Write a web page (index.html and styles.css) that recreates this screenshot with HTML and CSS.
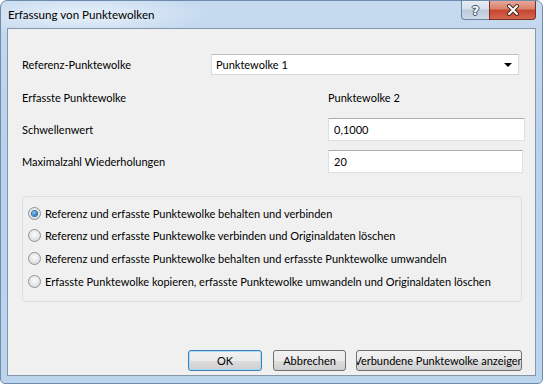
FILE: index.html
```html
<!DOCTYPE html>
<html lang="de">
<head>
  <meta charset="UTF-8" />
  <title>Erfassung von Punktewolken</title>
  <link rel="stylesheet" href="styles.css">
</head>
<body>

  <div class="window">
    <div class="titlebar">
      <span class="title">Erfassung von Punktewolken</span>
      <div class="caption-buttons">
        <div class="cap-btn help">?</div>
        <div class="cap-btn close">
          <svg width="16" height="14" viewBox="0 0 16 14">
            <path d="M4 3 L12 11 M12 3 L4 11" stroke="#4a2a24" stroke-width="4" stroke-linecap="round"/>
            <path d="M4 3 L12 11 M12 3 L4 11" stroke="#fff" stroke-width="2" stroke-linecap="round"/>
          </svg>
        </div>
      </div>
    </div>

    <div class="client">
      <div class="form">
        <div class="row row-first">
          <span class="label label-short">Referenz-Punktewolke</span>
          <div class="combo">
            <span>Punktewolke 1</span>
            <span class="arrow"></span>
          </div>
        </div>
        <div class="row">
          <span class="label">Erfasste Punktewolke</span>
          <span class="value">Punktewolke 2</span>
        </div>
        <div class="row">
          <span class="label">Schwellenwert</span>
          <input class="field" type="text" value="0,1000" />
        </div>
        <div class="row">
          <span class="label">Maximalzahl Wiederholungen</span>
          <input class="field field-narrow" type="text" value="20" />
        </div>
      </div>

      <div class="group">
        <label class="option"><span class="radio checked"></span>Referenz und erfasste Punktewolke behalten und verbinden</label>
        <label class="option"><span class="radio"></span>Referenz und erfasste Punktewolke verbinden und Originaldaten löschen</label>
        <label class="option"><span class="radio"></span>Referenz und erfasste Punktewolke behalten und erfasste Punktewolke umwandeln</label>
        <label class="option"><span class="radio"></span>Erfasste Punktewolke kopieren, erfasste Punktewolke umwandeln und Originaldaten löschen</label>
      </div>

      <div class="actions">
        <button class="btn btn-default">OK</button>
        <button class="btn">Abbrechen</button>
        <button class="btn btn-wide"><span>Verbundene Punktewolke anzeigen</span></button>
      </div>
    </div>
  </div>

</body>
</html>
```

FILE: styles.css
```css
body {
  margin: 0;
  background: #fff;
  font-family: 'Lato', sans-serif;
  font-size: 11px;
  color: #000;
}

.window {
  width: 543px;
  height: 384px;
  box-sizing: border-box;
  border: 1px solid #6f8bab;
  border-radius: 7px 7px 5px 5px;
  background:
    radial-gradient(ellipse 130px 22px at 80px 14px, rgba(235, 243, 251, 0.9), rgba(235, 243, 251, 0) 100%),
    linear-gradient(to bottom, #c6daef, #b9d1ea 40%, #bcd4ec);
  display: flex;
  flex-direction: column;
  overflow: hidden;
}

.titlebar {
  height: 27px;
  display: flex;
  justify-content: space-between;
  align-items: flex-start;
  flex-shrink: 0;
}

.title {
  padding: 7px 0 0 7px;
  font-size: 11.6px;
  color: #000;
}

.caption-buttons {
  display: flex;
  margin-right: 6px;
}

.cap-btn {
  height: 19px;
  display: flex;
  align-items: center;
  justify-content: center;
  box-sizing: border-box;
}

.help {
  width: 28px;
  border: 1px solid #6a84a2;
  border-top: none;
  border-right: none;
  border-radius: 0 0 0 4px;
  background: linear-gradient(to bottom, #e6edf5, #d5e0ec 45%, #bccbdc 50%, #cbd9e8);
  color: #fff;
  font-family: 'DejaVu Sans', sans-serif;
  font-weight: bold;
  font-size: 13px;
  text-shadow: 1px 0 0 #3d4d60, -1px 0 0 #3d4d60, 0 1px 0 #3d4d60, 0 -1px 0 #3d4d60;
}

.close {
  width: 47px;
  border: 1px solid #7a2f22;
  border-top: none;
  border-radius: 0 0 4px 0;
  background: linear-gradient(to bottom, #e6a797, #d9806d 45%, #c7452f 50%, #d4664f);
}

.client {
  flex: 1;
  margin: 0 6px 7px 6px;
  border: 1px solid #8396ac;
  background: #f0f0f0;
  padding: 19px 0 0 14px;
  display: flex;
  flex-direction: column;
}

.row {
  height: 32px;
  display: flex;
  align-items: center;
}

.row-first {
  height: 33px;
}

.label {
  width: 306px;
  flex-shrink: 0;
}

.label-short {
  width: 189px;
}

.value {
  color: #000;
}

.combo {
  width: 308px;
  height: 21px;
  box-sizing: border-box;
  border: 1px solid #d9d9d9;
  border-top-color: #c0c0c0;
  background: #fff;
  display: flex;
  align-items: center;
  justify-content: space-between;
  padding: 0 6px 0 4px;
}

.arrow {
  width: 0;
  height: 0;
  border-left: 4px solid transparent;
  border-right: 4px solid transparent;
  border-top: 4px solid #000;
}

.field {
  width: 197px;
  height: 23px;
  box-sizing: border-box;
  border: 1px solid #dbdfe6;
  border-top-color: #abadb3;
  background: #fff;
  padding: 0 5px;
  font-family: inherit;
  font-size: inherit;
  color: #000;
  outline: none;
}

.field-narrow {
  width: 195px;
}

.group {
  width: 500px;
  box-sizing: border-box;
  margin-top: 19px;
  border: 1px solid #d5dfe5;
  border-radius: 3px;
  padding: 5px 0 8px 5px;
}

.option {
  height: 22.67px;
  display: flex;
  align-items: center;
  gap: 4px;
  white-space: nowrap;
}

.radio {
  width: 13px;
  height: 13px;
  flex-shrink: 0;
  box-sizing: border-box;
  border: 1px solid #8f9295;
  border-radius: 50%;
  background: radial-gradient(circle at 50% 40%, #fdfdfd, #e2e3e4 60%, #cdcfd1);
  display: flex;
  align-items: center;
  justify-content: center;
}

.radio.checked::after {
  content: "";
  width: 5px;
  height: 5px;
  border-radius: 50%;
  background: radial-gradient(circle at 40% 35%, #8fd0ff, #1f73c2 70%, #154f8c);
  box-shadow: 0 0 0 1px #3c6f9e;
}

.actions {
  margin-top: auto;
  margin-bottom: 4px;
  padding-right: 13px;
  display: flex;
  justify-content: flex-end;
}

.btn {
  height: 21px;
  width: 73px;
  margin-left: 11px;
  box-sizing: border-box;
  border: 1px solid #707070;
  border-radius: 3px;
  background: linear-gradient(to bottom, #f2f2f2, #ebebeb 50%, #dddddd 50%, #cfcfcf);
  font-family: inherit;
  font-size: inherit;
  color: #000;
  padding: 0;
  display: flex;
  align-items: center;
  justify-content: center;
  overflow: hidden;
}

.btn-default {
  width: 74px;
  border-color: #3c7fb1;
  box-shadow: inset 0 0 0 1px #a9dcf7;
}

.btn-wide {
  width: 166px;
  margin-left: 10px;
}

.btn-wide span {
  white-space: nowrap;
  flex-shrink: 0;
}
```
